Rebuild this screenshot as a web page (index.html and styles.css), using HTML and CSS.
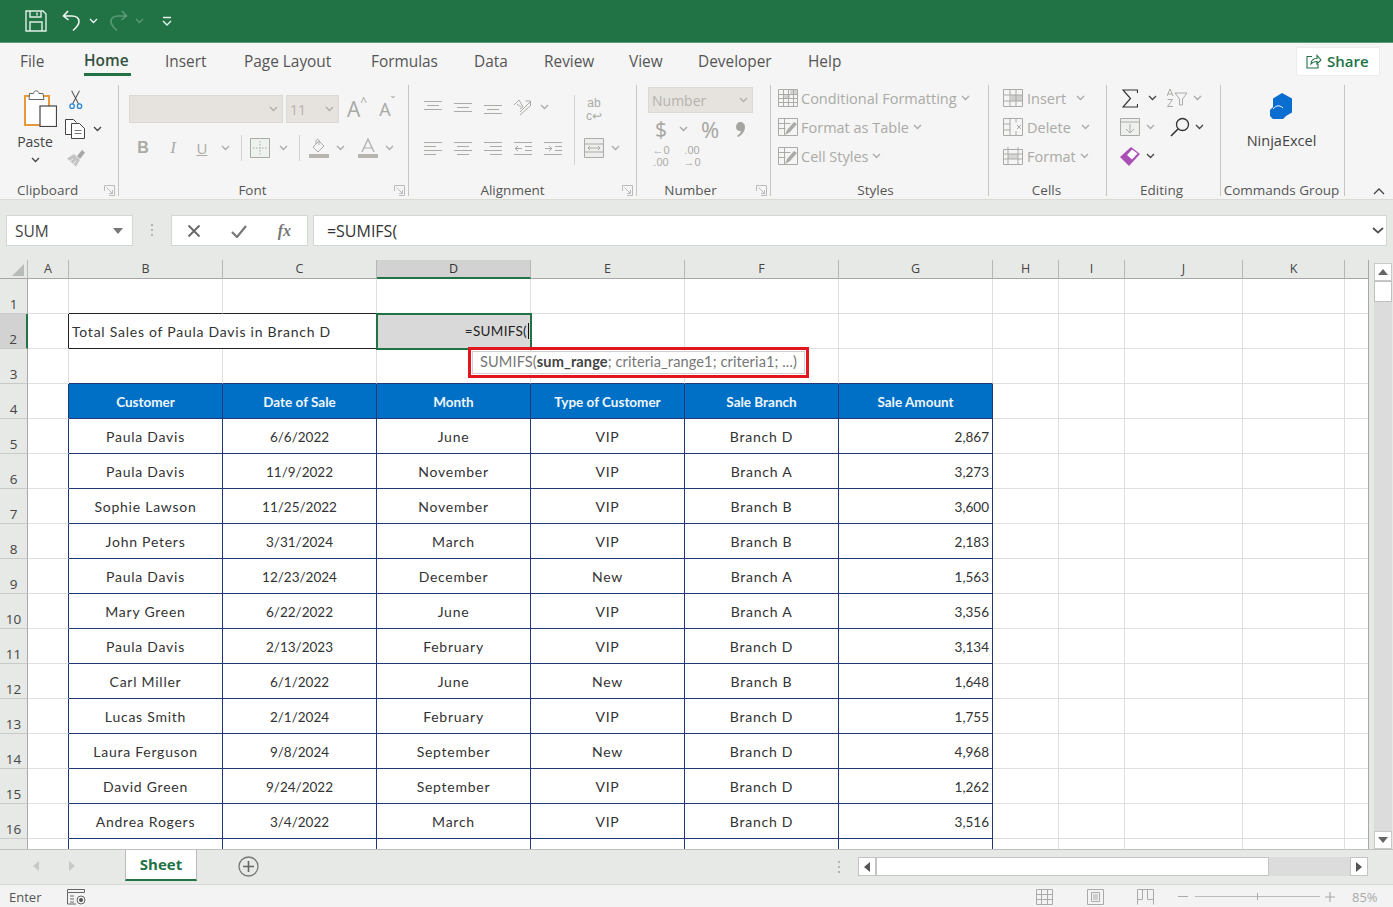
FILE: index.html
```html
<!DOCTYPE html>
<html lang="en">
<head>
<meta charset="utf-8">
<title>Excel</title>
<link rel="stylesheet" href="styles.css">
</head>
<body>
<svg class="sprite" aria-hidden="true">
  <symbol id="chev" viewBox="0 0 9 6"><path d="M1 1l3.500 3.500L8 1" fill="none" stroke="currentColor" stroke-width="1.300"/></symbol>
  <symbol id="launch" viewBox="0 0 11 11"><path d="M.5 6V.5H10.500V10.500H5M2.500 2.500l6 6M5 8.500h3.500V5" fill="none" stroke="currentColor"/></symbol>
  <symbol id="gridi" viewBox="0 0 20 20"><path d="M12 2h7v5h-7zM6 7h6v4H6z" fill="currentColor" opacity=".45"/><path d="M.5 1.500h19v17H.5zM.5 6.500h19M.5 10.500h19M.5 14.500h19M5.500 1.500v17M10.500 1.500v17M15.500 1.500v17" fill="none" stroke="currentColor"/></symbol>
  <symbol id="brushcell" viewBox="0 0 20 20"><path d="M.5 1.500h19v17H.5zM.5 6.500h12M.5 11.500h7M6.500 1.500v17" fill="none" stroke="currentColor"/><path d="M7 18l2-5 7-8 3 2-7 8z" fill="currentColor"/></symbol>
</svg>

<header class="titlebar">
  <svg class="qs-save" width="22" height="22" viewBox="0 0 22 22"><path d="M1 1h17l3 3v17H1zM5 1v6h11V1M5 21v-9h12v9M12 2.500v3" fill="none" stroke="#dfeee5" stroke-width="1.400"/></svg>
  <svg class="qs-undo" width="19" height="22" viewBox="0 0 19 22"><path d="M6 1L1.500 6 6.500 10M2 6h8c4 0 7 2 7 5.500 0 3-2.500 6-6 9" fill="none" stroke="#f0f6f2" stroke-width="1.600"/></svg>
  <svg class="qs-c1" width="9" height="6"><use href="#chev" class="cw"/></svg>
  <svg class="qs-redo" width="19" height="22" viewBox="0 0 19 22"><path d="M13 1l4.500 5L12.500 10M17 6H9C5 6 2 8 2 11.500c0 3 2.500 6 6 9" fill="none" stroke="#5c9a78" stroke-width="1.600"/></svg>
  <svg class="qs-c2" width="9" height="6"><use href="#chev" class="cf"/></svg>
  <svg class="qs-more" width="10" height="11" viewBox="0 0 10 11"><path d="M1 1.500h8M1 5l4 4 4-4" fill="none" stroke="#e8f2ec" stroke-width="1.400"/></svg>
</header>

<nav class="tabs">
  <span class="tab t-file">File</span>
  <span class="tab t-home">Home</span>
  <span class="tab t-ins">Insert</span>
  <span class="tab t-pl">Page Layout</span>
  <span class="tab t-for">Formulas</span>
  <span class="tab t-dat">Data</span>
  <span class="tab t-rev">Review</span>
  <span class="tab t-vie">View</span>
  <span class="tab t-dev">Developer</span>
  <span class="tab t-hel">Help</span>
  <button class="share">
    <svg width="16" height="15" viewBox="0 0 16 15"><path d="M6 2.500H1v11.500h11v-4M5 10c0-4 3-5.500 6-5.500V1.500L15 6l-4 4V7.500C8.500 7.500 6.500 8 5 10z" fill="none" stroke="#217346" stroke-width="1.100"/></svg>
    <span>Share</span>
  </button>
</nav>

<section class="ribbon">
  <div class="group g-clip">
    <div class="body clip-body">
      <div class="paste">
        <svg class="paste-i" width="33" height="37" viewBox="0 0 33 37"><path d="M1 6h24v29H1z" fill="#fff" stroke="#e8973a" stroke-width="2"/><path d="M5.500 3.500h4c.5-3.500 5-3.500 5.500 0h4l1 6H5z" fill="#fff" stroke="#666"/><rect x="16" y="16" width="16.500" height="20.500" fill="#fff" stroke="#444" stroke-width="1.200"/></svg>
        <span class="paste-t">Paste</span>
        <svg class="dark" width="9" height="6"><use href="#chev"/></svg>
      </div>
      <div class="clip-tools">
        <svg class="cut" width="14" height="20" viewBox="0 0 16 21"><path d="M3 0l8 15M12 0L4 15" stroke="#555" stroke-width="1.200" fill="none"/><circle cx="3.500" cy="17.500" r="2.500" fill="none" stroke="#2b88d8" stroke-width="1.500"/><circle cx="12" cy="17.500" r="2.500" fill="none" stroke="#2b88d8" stroke-width="1.500"/></svg>
        <div class="copy">
          <svg width="21" height="20" viewBox="0 0 21 20"><path d="M6 15.500H.5V.5h8l3 3" fill="#fff" stroke="#444"/><path d="M6.500 4.500h8l5 5v10h-13z" fill="#fff" stroke="#444"/><path d="M9.500 11.500h7M9.500 14.500h7" stroke="#777"/></svg>
          <svg class="dark" width="9" height="6"><use href="#chev"/></svg>
        </div>
        <svg class="brush" width="20" height="18" viewBox="0 0 20 18"><path d="M1 9.500l7-4.500 6 6-4 6.500z" fill="#c4c4c4"/><path d="M11 7l5-6 3 2.500L14 10z" fill="#a8a8a8"/><path d="M4 12l3-2M7 15l3-3" stroke="#f2f2f2"/></svg>
      </div>
    </div>
    <div class="glabel">Clipboard</div>
    <svg class="launcher dk" width="11" height="11"><use href="#launch"/></svg>
  </div>

  <div class="group g-font">
    <div class="body">
      <div class="font-r1">
        <div class="combo c-font"><svg class="cc" width="9" height="6"><use href="#chev"/></svg></div>
        <div class="combo c-size"><span>11</span><svg class="cc" width="9" height="6"><use href="#chev"/></svg></div>
        <span class="grow g1">A<sup>^</sup></span>
        <span class="grow g2">A<sup>ˇ</sup></span>
      </div>
      <div class="font-r2 dis">
        <b class="fb">B</b><i class="fi">I</i><u class="fu">U</u>
        <svg width="9" height="6"><use href="#chev"/></svg>
        <span class="vsep"></span>
        <svg width="20" height="20" viewBox="0 0 20 20"><path d="M.5.500h19v19H.5z" fill="#eef2ee" stroke="currentColor"/><path d="M10 3v14M3 10h14" stroke="currentColor" stroke-dasharray="1.500 1.500"/></svg>
        <svg width="9" height="6"><use href="#chev"/></svg>
        <span class="vsep"></span>
        <svg width="20" height="20" viewBox="0 0 20 20"><path d="M4 9l6-6 5 5-6 6zM7 6V2.500c1-2 3-1 3 0V7" fill="none" stroke="currentColor"/><rect y="16" width="20" height="4" fill="#b6b6ae"/></svg>
        <svg width="9" height="6"><use href="#chev"/></svg>
        <em></em>
        <svg width="20" height="20" viewBox="0 0 20 20"><path d="M4 14L10 1l6 13M6 10h8" fill="none" stroke="currentColor" stroke-width="1.200"/><rect y="16" width="20" height="4" fill="#b6b6ae"/></svg>
        <svg width="9" height="6"><use href="#chev"/></svg>
      </div>
    </div>
    <div class="glabel">Font</div>
    <svg class="launcher" width="11" height="11"><use href="#launch"/></svg>
  </div>

  <div class="group g-align">
    <div class="body align-body dis">
      <div class="align-main">
        <div class="al-r al-r1">
          <svg width="18" height="14" viewBox="0 0 18 14"><path d="M0 1.500h18M3 5.500h12M0 9.500h18" stroke="currentColor"/></svg>
          <svg width="18" height="14" viewBox="0 0 18 14"><path d="M0 3.500h18M3 7.500h12M0 11.500h18" stroke="currentColor"/></svg>
          <svg width="18" height="14" viewBox="0 0 18 14"><path d="M0 5.500h18M3 9.500h12M0 13.500h18" stroke="currentColor"/></svg>
          <svg width="20" height="18" viewBox="0 0 20 18"><path d="M1 7l5-5 4 7-3 2M4 6l4 3M7 14L17 4M12.500 3H17.500v5M7 17L17 8" fill="none" stroke="currentColor"/></svg>
          <svg width="9" height="6"><use href="#chev"/></svg>
        </div>
        <div class="al-r">
          <svg width="18" height="14" viewBox="0 0 18 14"><path d="M0 1.500h18M0 5.500h12M0 9.500h18M0 13.500h12" stroke="currentColor"/></svg>
          <svg width="18" height="14" viewBox="0 0 18 14"><path d="M0 1.500h18M3 5.500h12M0 9.500h18M3 13.500h12" stroke="currentColor"/></svg>
          <svg width="18" height="14" viewBox="0 0 18 14"><path d="M0 1.500h18M6 5.500h12M0 9.500h18M6 13.500h12" stroke="currentColor"/></svg>
          <svg width="18" height="14" viewBox="0 0 18 14"><path d="M0 1.500h18M11 5.500h7M11 9.500h7M0 13.500h18M8 7.500H1M4 5l-3 2.500L4 10" fill="none" stroke="currentColor"/></svg>
          <svg width="18" height="14" viewBox="0 0 18 14"><path d="M0 1.500h18M11 5.500h7M11 9.500h7M0 13.500h18M1 7.500h7M5 5l3 2.500L5 10" fill="none" stroke="currentColor"/></svg>
        </div>
      </div>
      <span class="al-sep"></span>
      <div class="align-wrap">
        <span class="wrap-t">ab<br>c↩</span>
        <div class="merge">
          <svg width="20" height="20" viewBox="0 0 20 20"><path d="M.5.500h19v19H.5zM.5 6h19M.5 14h19" fill="#eee" stroke="currentColor"/><path d="M4 10h12M6 8l-2 2 2 2M14 8l2 2-2 2" fill="none" stroke="currentColor"/></svg>
          <svg width="9" height="6"><use href="#chev"/></svg>
        </div>
      </div>
    </div>
    <div class="glabel">Alignment</div>
    <svg class="launcher" width="11" height="11"><use href="#launch"/></svg>
  </div>

  <div class="group g-num">
    <div class="body dis">
      <div class="combo c-num"><span>Number</span><svg class="cc" width="9" height="6"><use href="#chev"/></svg></div>
      <div class="num-r2">
        <span class="n-d">$</span>
        <svg width="9" height="6"><use href="#chev"/></svg>
        <span class="n-p">%</span>
        <svg width="10" height="15" viewBox="0 0 10 15"><path d="M5 0c3 0 5 2 5 5 0 4-3 8-7 10l-1-1c2-1.500 3.500-3 4-5C3 9.500 1 7.500 1 5c0-3 2-5 4-5z" fill="currentColor"/></svg>
      </div>
      <div class="num-r3">
        <span class="dec">←0<br>.00</span>
        <span class="dec">.00<br>→0</span>
      </div>
    </div>
    <div class="glabel">Number</div>
    <svg class="launcher" width="11" height="11"><use href="#launch"/></svg>
  </div>

  <div class="group g-styles">
    <div class="body list dis">
      <div class="li"><svg width="20" height="20"><use href="#gridi"/></svg><span>Conditional Formatting</span><svg class="lc" width="9" height="6"><use href="#chev"/></svg></div>
      <div class="li"><svg width="20" height="20"><use href="#brushcell"/></svg><span>Format as Table</span><svg class="lc" width="9" height="6"><use href="#chev"/></svg></div>
      <div class="li"><svg width="20" height="20"><use href="#brushcell"/></svg><span>Cell Styles</span><svg class="lc" width="9" height="6"><use href="#chev"/></svg></div>
    </div>
    <div class="glabel">Styles</div>
  </div>

  <div class="group g-cells">
    <div class="body list dis">
      <div class="li"><svg width="20" height="20" viewBox="0 0 20 20"><path d="M.5 1.500h19v17H.5zM.5 7h19M.5 13h19M7 1.500v17M13 1.500v17" fill="none" stroke="currentColor"/><path d="M8 7h11v6H8z" fill="currentColor" opacity=".5"/></svg><span class="cw1">Insert</span><svg width="9" height="6"><use href="#chev"/></svg></div>
      <div class="li"><svg width="20" height="20" viewBox="0 0 20 20"><path d="M.5 1.500h19v17H.5zM.5 7h7M.5 13h7M7 1.500v17M13 1.500v4M13 14v4" fill="none" stroke="currentColor"/><path d="M14 8l4 4M18 8l-4 4" stroke="currentColor"/></svg><span class="cw2">Delete</span><svg width="9" height="6"><use href="#chev"/></svg></div>
      <div class="li"><svg width="20" height="20" viewBox="0 0 20 20"><path d="M.5 3.500h19v15H.5zM.5 8h19M.5 13h19M5 1v17.500M15 1v17.500" fill="none" stroke="currentColor"/><path d="M5 8h10v5H5z" fill="currentColor" opacity=".4"/></svg><span class="cw3">Format</span><svg width="9" height="6"><use href="#chev"/></svg></div>
    </div>
    <div class="glabel">Cells</div>
  </div>

  <div class="group g-edit">
    <div class="body list">
      <div class="ed ed1">
        <svg width="16" height="19" viewBox="0 0 16 19"><path d="M15.500 4V1H1l7.500 8.500L1 18h14.500v-3" fill="none" stroke="#333" stroke-width="1.200"/></svg>
        <svg class="dark" width="9" height="6"><use href="#chev"/></svg>
        <svg class="dis" width="21" height="20" viewBox="0 0 21 20"><path d="M0 8l3-7 3 7M1 6h4M.5 11.500h5l-5 7h5.500" fill="none" stroke="currentColor"/><path d="M8 5h12l-4.500 6v6h-3v-6z" fill="none" stroke="currentColor"/></svg>
        <svg class="dis" width="9" height="6"><use href="#chev"/></svg>
      </div>
      <div class="ed ed2">
        <svg class="dis" width="20" height="18" viewBox="0 0 20 18"><path d="M.5.500h19v17H.5zM.5 4h19" fill="#eef0ee" stroke="currentColor"/><path d="M10 6v9M6 11l4 4 4-4" fill="none" stroke="currentColor"/></svg>
        <svg class="dis" width="9" height="6"><use href="#chev"/></svg>
        <em></em>
        <svg class="dark" width="20" height="20" viewBox="0 0 20 20"><circle cx="12.500" cy="7.500" r="6" fill="none" stroke="#333" stroke-width="1.300"/><path d="M8 12l-7 7" stroke="#333" stroke-width="1.600"/></svg>
        <svg class="dark" width="9" height="6"><use href="#chev"/></svg>
      </div>
      <div class="ed ed3">
        <svg width="20" height="19" viewBox="0 0 20 19"><path d="M0 10L11 0l9 7L9 19z" fill="#a94fb5"/><path d="M7 8l5-5.500 5.500 4L12 12.500z" fill="#fff"/></svg>
        <svg class="dark" width="9" height="6"><use href="#chev"/></svg>
      </div>
    </div>
    <div class="glabel">Editing</div>
  </div>

  <div class="group g-cmd">
    <div class="body cmd-body">
      <svg width="24" height="27" viewBox="0 0 24 27"><path d="M12 0l10 5.500v14l-6 3.500-3 3H3l-3-3v-6l3-3V5.500z" fill="#0a6ed1"/><path d="M3 16c3-4 7-4 10-1" fill="none" stroke="#fff"/></svg>
      <span class="ninja">NinjaExcel</span>
    </div>
    <div class="glabel">Commands Group</div>
  </div>

  <svg class="collapse" width="12" height="8" viewBox="0 0 12 8"><path d="M1 7l5-5 5 5" fill="none" stroke="#444" stroke-width="1.300"/></svg>
</section>

<section class="fbar">
  <div class="namebox"><span>SUM</span><svg width="10" height="6" viewBox="0 0 10 6"><path d="M0 0h10L5 6z" fill="#777"/></svg></div>
  <span class="fdots"></span>
  <div class="fbtns">
    <svg width="14" height="14" viewBox="0 0 14 14"><path d="M1.500 1.500l11 11M12.500 1.500l-11 11" stroke="#666" stroke-width="1.800"/></svg>
    <svg width="16" height="14" viewBox="0 0 16 14"><path d="M1 8l5 5L15 2" fill="none" stroke="#777" stroke-width="2.200"/></svg>
    <span class="fx">fx</span>
  </div>
  <div class="finput"><span>=SUMIFS(</span><svg width="12" height="7" viewBox="0 0 12 7"><path d="M1 1l5 4.500L11 1" fill="none" stroke="#555" stroke-width="1.800"/></svg></div>
</section>

<main class="workarea">
  <div class="sheet">
    <table class="grid">
      <colgroup>
        <col class="c-rh"><col class="c-a"><col class="c-m"><col class="c-m"><col class="c-m"><col class="c-m"><col class="c-m"><col class="c-m"><col class="c-h"><col class="c-h"><col class="c-j"><col class="c-k"><col class="c-l">
      </colgroup>
      <tr class="hdr">
        <th class="corner"><svg width="12" height="12" viewBox="0 0 12 12"><path d="M12 0v12H0z" fill="#b8bcb8"/></svg></th>
        <th>A</th><th>B</th><th>C</th><th class="sel">D</th><th>E</th><th>F</th><th>G</th><th>H</th><th>I</th><th>J</th><th>K</th><th class="last"></th>
      </tr>
      <tr><th class="rh">1</th><td></td><td class="bk-b"></td><td class="bk-b"></td><td></td><td></td><td></td><td></td><td></td><td></td><td></td><td></td><td></td></tr>
      <tr><th class="rh rsel">2</th><td class="bk-r"></td><td colspan="2" class="title bk-b bk-r">Total Sales of Paula Davis in Branch D</td><td class="active">=SUMIFS(<span class="caret"></span></td><td></td><td></td><td></td><td></td><td></td><td></td><td></td><td></td></tr>
      <tr><th class="rh">3</th><td></td><td class="nv-b"></td><td class="nv-b"></td><td class="nv-b"></td><td class="nv-b"></td><td class="nv-b"></td><td class="nv-b"></td><td></td><td></td><td></td><td></td><td></td></tr>
      <tr class="thead"><th class="rh">4</th><td class="nv-r"></td><td class="h">Customer</td><td class="h">Date of Sale</td><td class="h">Month</td><td class="h">Type of Customer</td><td class="h">Sale Branch</td><td class="h">Sale Amount</td><td></td><td></td><td></td><td></td><td></td></tr>
      <tr><th class="rh">5</th><td class="nv-r"></td><td class="d">Paula Davis</td><td class="d v">6/6/2022</td><td class="d">June</td><td class="d">VIP</td><td class="d">Branch D</td><td class="d v n">2,867</td><td></td><td></td><td></td><td></td><td></td></tr>
      <tr><th class="rh">6</th><td class="nv-r"></td><td class="d">Paula Davis</td><td class="d v">11/9/2022</td><td class="d">November</td><td class="d">VIP</td><td class="d">Branch A</td><td class="d v n">3,273</td><td></td><td></td><td></td><td></td><td></td></tr>
      <tr><th class="rh">7</th><td class="nv-r"></td><td class="d">Sophie Lawson</td><td class="d v">11/25/2022</td><td class="d">November</td><td class="d">VIP</td><td class="d">Branch B</td><td class="d v n">3,600</td><td></td><td></td><td></td><td></td><td></td></tr>
      <tr><th class="rh">8</th><td class="nv-r"></td><td class="d">John Peters</td><td class="d v">3/31/2024</td><td class="d">March</td><td class="d">VIP</td><td class="d">Branch B</td><td class="d v n">2,183</td><td></td><td></td><td></td><td></td><td></td></tr>
      <tr><th class="rh">9</th><td class="nv-r"></td><td class="d">Paula Davis</td><td class="d v">12/23/2024</td><td class="d">December</td><td class="d">New</td><td class="d">Branch A</td><td class="d v n">1,563</td><td></td><td></td><td></td><td></td><td></td></tr>
      <tr><th class="rh">10</th><td class="nv-r"></td><td class="d">Mary Green</td><td class="d v">6/22/2022</td><td class="d">June</td><td class="d">VIP</td><td class="d">Branch A</td><td class="d v n">3,356</td><td></td><td></td><td></td><td></td><td></td></tr>
      <tr><th class="rh">11</th><td class="nv-r"></td><td class="d">Paula Davis</td><td class="d v">2/13/2023</td><td class="d">February</td><td class="d">VIP</td><td class="d">Branch D</td><td class="d v n">3,134</td><td></td><td></td><td></td><td></td><td></td></tr>
      <tr><th class="rh">12</th><td class="nv-r"></td><td class="d">Carl Miller</td><td class="d v">6/1/2022</td><td class="d">June</td><td class="d">New</td><td class="d">Branch B</td><td class="d v n">1,648</td><td></td><td></td><td></td><td></td><td></td></tr>
      <tr><th class="rh">13</th><td class="nv-r"></td><td class="d">Lucas Smith</td><td class="d v">2/1/2024</td><td class="d">February</td><td class="d">VIP</td><td class="d">Branch D</td><td class="d v n">1,755</td><td></td><td></td><td></td><td></td><td></td></tr>
      <tr><th class="rh">14</th><td class="nv-r"></td><td class="d">Laura Ferguson</td><td class="d v">9/8/2024</td><td class="d">September</td><td class="d">New</td><td class="d">Branch D</td><td class="d v n">4,968</td><td></td><td></td><td></td><td></td><td></td></tr>
      <tr><th class="rh">15</th><td class="nv-r"></td><td class="d">David Green</td><td class="d v">9/24/2022</td><td class="d">September</td><td class="d">VIP</td><td class="d">Branch D</td><td class="d v n">1,262</td><td></td><td></td><td></td><td></td><td></td></tr>
      <tr><th class="rh">16</th><td class="nv-r"></td><td class="d">Andrea Rogers</td><td class="d v">3/4/2022</td><td class="d">March</td><td class="d">VIP</td><td class="d">Branch D</td><td class="d v n">3,516</td><td></td><td></td><td></td><td></td><td></td></tr>
      <tr><th class="rh"></th><td class="nv-r"></td><td class="d"></td><td class="d"></td><td class="d"></td><td class="d"></td><td class="d"></td><td class="d"></td><td></td><td></td><td></td><td></td><td></td></tr>
    </table>
    <div class="tip"><div class="tip-in">SUMIFS(<b>sum_range</b>; criteria_range1; criteria1; ...)</div></div>
  </div>
  <aside class="vscroll">
    <span class="sbtn"><svg width="10" height="6" viewBox="0 0 10 6"><path d="M5 0l5 6H0z" fill="#666"/></svg></span>
    <span class="vthumb"></span>
    <span class="vtrack"></span>
    <span class="sbtn"><svg width="10" height="6" viewBox="0 0 10 6"><path d="M0 0h10L5 6z" fill="#666"/></svg></span>
  </aside>
</main>

<section class="sheetbar">
  <svg class="nav1" width="6" height="10" viewBox="0 0 6 10"><path d="M6 0v10L0 5z" fill="#c8c8c8"/></svg>
  <svg class="nav2" width="6" height="10" viewBox="0 0 6 10"><path d="M0 0v10l6-5z" fill="#c8c8c8"/></svg>
  <div class="sheettab">Sheet</div>
  <svg class="addsheet" width="21" height="21" viewBox="0 0 21 21"><circle cx="10.500" cy="10.500" r="9.500" fill="none" stroke="#777" stroke-width="1.300"/><path d="M10.500 5v11M5 10.500h11" stroke="#666" stroke-width="1.600"/></svg>
  <span class="sdots"></span>
  <div class="hscroll">
    <span class="hbtn"><svg width="6" height="10" viewBox="0 0 6 10"><path d="M6 0v10L0 5z" fill="#555"/></svg></span>
    <span class="hthumb"></span>
    <span class="htrack"></span>
    <span class="hbtn"><svg width="6" height="10" viewBox="0 0 6 10"><path d="M0 0v10l6-5z" fill="#555"/></svg></span>
  </div>
</section>

<footer class="status">
  <span class="st-enter">Enter</span>
  <svg class="st-macro" width="19" height="16" viewBox="0 0 19 16"><path d="M.5.500h17v3H.5zM.5 3.500V15H9M3 7h4M3 10h4M3 13h4" fill="none" stroke="#666"/><circle cx="14" cy="11" r="4" fill="none" stroke="#666"/><circle cx="14" cy="11" r="2" fill="#555"/></svg>
  <svg class="st-v1" width="17" height="16" viewBox="0 0 17 16"><path d="M.5.500h16v15H.5zM.5 5.500h16M.5 10.500h16M5.500.500v15M11.500.500v15" fill="none" stroke="#aaa"/></svg>
  <svg class="st-v2" width="17" height="16" viewBox="0 0 17 16"><path d="M.5.500h16v15H.5zM4.500 3.500h8v9h-8zM6 6h5M6 8h5M6 10h5" fill="none" stroke="#aaa"/></svg>
  <svg class="st-v3" width="17" height="16" viewBox="0 0 17 16"><path d="M.5 15.500V.500h16v15M.5 10.500h5v-10M10.500.500v10h6" fill="none" stroke="#aaa"/></svg>
  <span class="st-minus"></span>
  <span class="st-slider"><span class="st-tick"></span></span>
  <svg class="st-plus" width="10" height="10" viewBox="0 0 10 10"><path d="M5 0v10M0 5h10" stroke="#aaa" stroke-width="1.200"/></svg>
  <span class="st-zoom">85%</span>
</footer>
</body>
</html>
```

FILE: styles.css
```css
* { box-sizing: border-box; }
html, body { margin: 0; padding: 0; }
body {
  width: 1393px; height: 907px; overflow: hidden;
  display: flex; flex-direction: column;
  background: #e6e9e6; color: #444;
  font-family: "Open Sans", "Noto Sans", sans-serif;
}
.sprite { position: absolute; width: 0; height: 0; }
svg { display: block; flex: none; }
.cw { color: #f0f6f2; }
.cf { color: #5c9a78; }
.dis { color: #aaaaa6; }
.dark { color: #444; }
.dk { color: #666; }

/* title bar */
.titlebar { height: 42px; flex: none; background: #217346; display: flex; align-items: center; padding-left: 25px; }
.qs-undo { margin-left: 15px; }
.qs-c1 { margin-left: 8px; }
.qs-redo { margin-left: 11px; }
.qs-c2 { margin-left: 7px; }
.qs-more { margin-left: 18px; }

/* tabs */
.tabs { height: 38px; flex: none; background: #f5f5f5; border-top: 1px solid #5a9a78; display: grid; position: relative;
  grid-template-columns: 64px 81px 79px 127px 103px 70px 85px 69px 110px auto 1fr;
  align-items: center; padding-left: 20px; font-size: 15.400px; color: #555; }
.tab { height: 100%; line-height: 37px; white-space: nowrap; position: relative; }
.t-home { color: #33513f; font-weight: 600; font-size: 15.400px; width: 47px; border-bottom: 3px solid #217346; height: 33px; line-height: 36px; margin-bottom: 4px; }
.share { justify-self: end; margin-right: 13px; margin-bottom: 1px; width: 84px; height: 29px; background: #fff; border: 1px solid #ececec; border-radius: 2px;
  display: flex; align-items: center; gap: 5px; padding: 0 0 0 9px; color: #217346; font: 600 15px "Open Sans", sans-serif; }

/* ribbon */
.ribbon { height: 120px; flex: none; background: #f5f5f5; border-bottom: 1px solid #dbdbd6; display: flex; padding-top: 5px; position: relative; }
.group { height: 111px; flex: none; display: flex; flex-direction: column; border-right: 1px solid #c6c6c2; position: relative; }
.body { flex: 1; min-height: 0; }
.glabel { height: 15px; line-height: 18px; text-align: center; font-size: 13.500px; color: #555; white-space: nowrap; }
.launcher { position: absolute; right: 3px; bottom: 0; color: #bbb; }
.g-clip { width: 119px; }
.g-font { width: 290px; }
.g-align { width: 228px; }
.g-num { width: 134px; }
.g-styles { width: 218px; }
.g-cells { width: 118px; }
.g-edit { width: 114px; }
.g-cmd { width: 124px; }
.g-clip .glabel { text-align: left; padding-left: 17px; }
.g-font .glabel { padding-right: 22px; }
.g-align .glabel { padding-right: 20px; }
.g-num .glabel { padding-right: 26px; }
.g-styles .glabel { padding-right: 8px; }
.g-cells .glabel { padding-right: 2px; }
.g-edit .glabel { padding-right: 4px; }
.g-cmd .glabel { padding-right: 2px; }

.clip-body { display: flex; padding-left: 13px; }
.paste { width: 44px; display: flex; flex-direction: column; align-items: center; padding-top: 5px; }
.paste-i { margin-left: 10px; }
.paste-t { font-size: 14px; line-height: 20px; margin-top: 5px; }
.paste .dark { margin-top: 5px; }
.clip-tools { display: flex; flex-direction: column; padding-left: 8px; padding-top: 5px; }
.cut { margin-left: 4px; }
.copy { display: flex; align-items: center; gap: 7px; margin-top: 9px; }
.brush { margin-left: 1px; margin-top: 10px; }

.font-r1 { display: flex; align-items: center; padding: 10px 0 0 10px; }
.combo { height: 28px; background: #e6e2de; border: 1px solid #dcd8d4; display: flex; align-items: center; justify-content: space-between; padding: 0 4px 0 3px; color: #b5b2ae; font-size: 14px; }
.cc { color: #b0aeaa; margin-left: auto; }
.c-font { width: 154px; }
.c-size { width: 53px; margin-left: 3px; }
.grow { color: #a8a8a4; font-size: 21px; line-height: 28px; display: flex; }
.grow sup { font-size: 12px; line-height: 14px; }
.g1 { margin-left: 8px; }
.g2 { margin-left: 12px; font-size: 18px; }
.font-r2 { display: grid; grid-template-columns: 28px 32px 26px 20px 12px 26px 20px 12px 28px 14px 7px 27px 16px; justify-items: center; align-items: center; height: 28px; margin: 11px 0 0 10px; font-size: 15px; color: #aaaaa6; }
.fb { font-family: "Liberation Sans", sans-serif; font-size: 16px; }
.fi { font-family: "Liberation Serif", serif; font-size: 17px; }
.fu { font-size: 15px; }
.vsep { width: 1px; height: 26px; background: #d4d4d0; }

.align-body { display: flex; padding: 10px 0 0 9px; }
.align-main { width: 156px; }
.al-r { display: grid; grid-template-columns: repeat(5, 30px); justify-items: center; align-items: center; height: 24px; margin-top: 17px; }
.al-r1 { margin-top: 0; }
.al-r1 svg:nth-child(5) { justify-self: start; margin-left: 2px; }
.al-sep { width: 1px; height: 70px; background: #d4d4d0; }
.align-wrap { padding-left: 9px; }
.wrap-t { display: block; font: 12px/13px "Liberation Sans", sans-serif; height: 30px; padding-top: 2px; color: #aaaaa6; text-align: center; width: 20px; }
.merge { display: flex; align-items: center; gap: 7px; margin-top: 13px; }

.c-num { width: 105px; height: 26px; margin: 2px 0 0 11px; padding-left: 3px; font-size: 14px; }
.num-r2 { display: grid; grid-template-columns: 26px 18px 36px 24px; justify-items: center; align-items: center; height: 30px; margin: 1px 0 0 11px; font-size: 21px; line-height: 30px; color: #a4a4a0; }
.n-p { font-size: 22px; }
.num-r3 { display: grid; grid-template-columns: 26px 36px; justify-items: center; margin: 0 0 0 11px; }
.dec { font: 11px/12px "Liberation Sans", sans-serif; color: #aaaaa6; text-align: center; }

.list { display: flex; flex-direction: column; gap: 3px; padding-left: 7px; }
.li { height: 26px; display: flex; align-items: center; gap: 3px; font-size: 14.500px; white-space: nowrap; color: #aaaaa6; }
.lc { margin-left: 1px; }
.g-cells .list { padding-left: 14px; }
.g-cells .li { gap: 4px; }
.cw1 { width: 45px; } .cw2 { width: 50px; } .cw3 { width: 49px; }

.g-edit .list { padding-left: 11px; }
.ed { height: 26px; display: grid; align-items: center; justify-items: center; }
.ed1 { grid-template-columns: 24px 20px 30px 10px; }
.ed2 { grid-template-columns: 24px 16px 8px 28px 10px; }
.ed3 { grid-template-columns: 24px 16px; }

.cmd-body { display: flex; flex-direction: column; align-items: center; padding: 8px 2px 0 0; }
.ninja { font-size: 14.500px; line-height: 20px; margin-top: 11px; color: #444; }
.collapse { position: absolute; right: 8px; bottom: 4px; }

/* formula bar */
.fbar { height: 60px; flex: none; display: flex; align-items: flex-start; padding: 15px 6px 0 6px; }
.namebox { width: 127px; height: 31px; background: #fff; border: 1px solid #d4d8d4; display: flex; align-items: center; justify-content: space-between; padding: 0 9px 0 8px; font-size: 15.500px; color: #444; }
.fdots { width: 2px; height: 12px; margin: 9px 18px 0 18px; background: repeating-linear-gradient(#b5b5b5 0 2px, transparent 2px 5px); }
.fbtns { width: 137px; height: 31px; background: #fff; border: 1px solid #d4d8d4; display: grid; grid-template-columns: repeat(3, 45px); justify-items: center; align-items: center; }
.fx { font: italic 700 16px "Liberation Serif", serif; color: #777; }
.finput { width: 1075px; height: 31px; margin-left: 5px; background: #fff; border: 1px solid #d4d8d4; display: flex; align-items: center; justify-content: space-between; padding: 0 2px 0 13px; font-size: 16px; color: #333; }

/* sheet */
.workarea { height: 589px; flex: none; display: flex; }
.sheet { width: 1369px; height: 589px; overflow: hidden; position: relative; flex: none; border-right: 1px solid #a8a8a8; background: #fff; }
.grid { width: 1369px; table-layout: fixed; border-collapse: separate; border-spacing: 0; font-family: "Lato", "Open Sans", sans-serif; font-size: 14px; letter-spacing: .75px; color: #333; }
.c-rh { width: 28px; } .c-a { width: 41px; } .c-m { width: 154px; } .c-h { width: 66px; } .c-j { width: 118px; } .c-k { width: 102px; } .c-l { width: 24px; }
tr { height: 35px; }
tr.hdr { height: 19px; }
td { padding: 1px 0 0; border-right: 1px solid #dfdfdf; border-bottom: 1px solid #dfdfdf; white-space: nowrap; overflow: hidden; }
.hdr th { height: 19px; padding: 0 0 1px; background: #e6e9e6; border-right: 1px solid #b5b8b5; border-bottom: 1px solid #a8a8a8; font: 400 12.500px "Open Sans", sans-serif; color: #444; line-height: 17px; letter-spacing: 0; }
.hdr .last { border-right: 0; }
.hdr .sel { background: #d2d2d2; color: #333; border-bottom: 2px solid #217346; padding-bottom: 0; }
.corner svg { margin: 2px 0 0 12px; }
.rh { background: #e6e9e6; border-right: 1px solid #a8a8a8; border-bottom: 1px solid #c8cbc8; padding: 0; vertical-align: bottom; font: 400 13.500px/17px "Open Sans", sans-serif; color: #444; letter-spacing: 0; }
.rsel { background: #d2d2d2; border-right: 2px solid #217346; }
.bk-b { border-bottom-color: #222; }
.bk-r { border-right-color: #222; }
.nv-b { border-bottom-color: #203a78; }
.nv-r { border-right-color: #203a78; }
.title { padding: 0 0 0 3px; color: #333; }
.active { background: #d9d9d9; text-align: right; padding: 0 1px 0 0; outline: 2px solid #217346; outline-offset: -1px; position: relative; color: #222; font-size: 13.500px; letter-spacing: .3px; }
.caret { display: inline-block; width: 1px; height: 16px; background: #111; vertical-align: -3px; margin-left: 1px; }
.h, .d { border-right-color: #203a78; border-bottom-color: #203a78; text-align: center; }
.h { background: #0070c6; color: #eef6fc; font-weight: 700; font-size: 13.500px; letter-spacing: 0; }
.v { font-size: 13.500px; letter-spacing: 0; }
.n { text-align: right; padding-right: 3px; }
.tip { position: absolute; left: 468px; top: 87px; width: 341px; height: 31px; border: 3px solid #e3161f; }
.tip-in { margin: 1px; height: 23px; background: #fff; border: 1px solid #d0d0d0; padding-left: 7px; font: 400 14.600px/20px "Lato", "Open Sans", sans-serif; letter-spacing: .1px; color: #777; white-space: nowrap; }
.tip-in b { color: #444; }

.vscroll { width: 18px; margin-left: 5px; padding-top: 3px; display: flex; flex-direction: column; }
.sbtn { height: 18px; flex: none; background: #fff; border: 1px solid #c8c8c8; display: flex; align-items: center; justify-content: center; }
.vthumb { height: 21px; flex: none; background: #fff; border: 1px solid #c0c0c0; }
.vtrack { flex: 1; background: #dcdcdc; }

/* sheet bar */
.sheetbar { height: 35px; flex: none; display: flex; align-items: flex-start; border-top: 1px solid #c0c0c0; }
.nav1 { margin: 11px 0 0 33px; }
.nav2 { margin: 11px 0 0 30px; }
.sheettab { width: 72px; height: 31px; margin-left: 50px; background: #fff; border: 1px solid #bbb; border-top: 0; border-bottom: 2px solid #217346; text-align: center; color: #217346; font: 700 15px/29px "Open Sans", sans-serif; }
.addsheet { margin: 6px 0 0 41px; }
.sdots { width: 2px; height: 12px; margin: 11px 0 0 579px; background: repeating-linear-gradient(#b5b5b5 0 2px, transparent 2px 5px); }
.hscroll { width: 510px; height: 19px; margin: 7px 0 0 18px; display: flex; }
.hbtn { width: 18px; flex: none; background: #fff; border: 1px solid #c4c4c4; display: flex; align-items: center; justify-content: center; }
.hthumb { width: 393px; flex: none; background: #fff; border: 1px solid #c4c4c4; }
.htrack { flex: 1; background: #dcdcdc; }

/* status */
.status { height: 23px; flex: none; display: flex; align-items: center; background: #f3f3f3; border-top: 1px solid #d8d8d8; padding-top: 1px; font-size: 13px; color: #555; }
.st-enter { margin-left: 9px; width: 39px; }
.st-macro { margin-left: 19px; }
.st-v1 { margin-left: 950px; }
.st-v2 { margin-left: 34px; }
.st-v3 { margin-left: 33px; }
.st-minus { width: 10px; height: 1px; background: #aaa; margin-left: 24px; }
.st-slider { width: 125px; height: 1px; background: #bbb; margin-left: 7px; position: relative; }
.st-tick { position: absolute; left: 62px; top: -3px; width: 1px; height: 7px; background: #aaa; }
.st-plus { margin-left: 5px; }
.st-zoom { margin-left: 17px; color: #aaa; font-size: 13px; }
```
